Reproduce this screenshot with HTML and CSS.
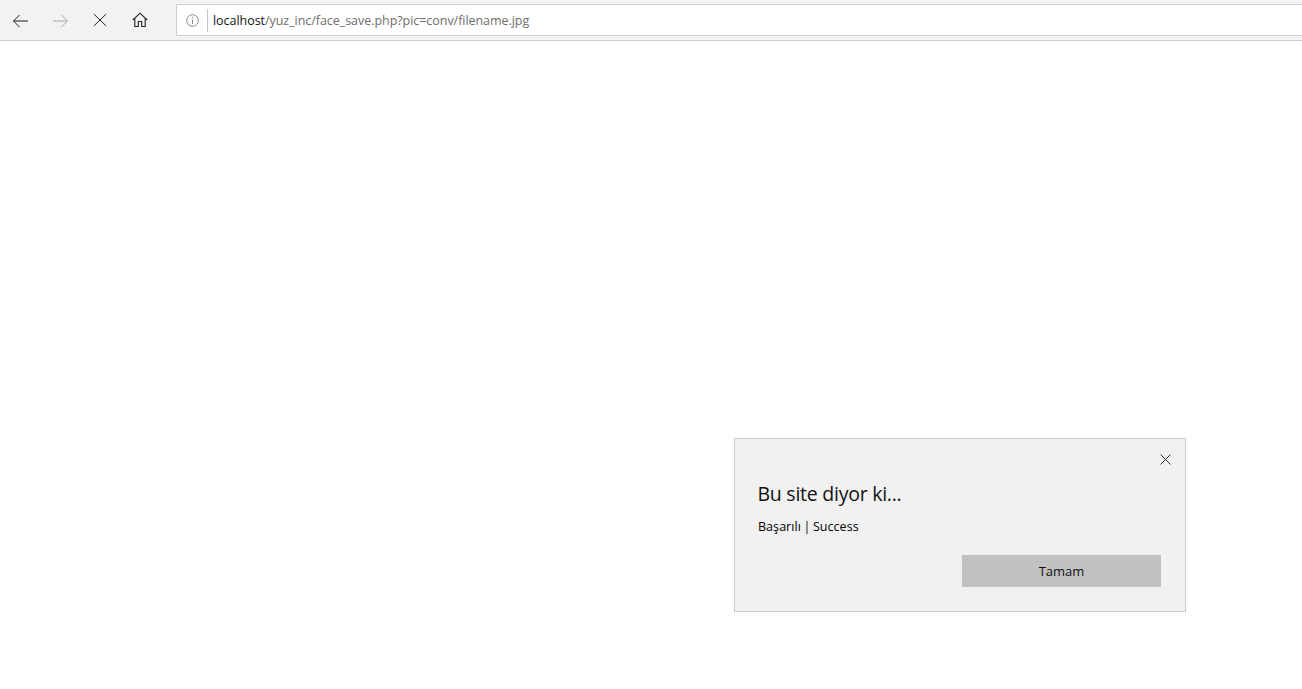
FILE: index.html
```html
<!DOCTYPE html>
<html lang="tr">
<head>
<meta charset="utf-8">
<title>Bu site diyor ki</title>
<link rel="stylesheet" href="styles.css">
</head>
<body>
<header class="toolbar">
  <nav class="nav">
    <span class="nav-btn"><svg width="16" height="16" viewBox="0 0 16 16"><path d="M16 9H1.500M7.500 3l-6 6 6 6" fill="none" stroke="#1c1c1c" stroke-width="1"/></svg></span>
    <span class="nav-btn"><svg width="16" height="16" viewBox="0 0 16 16"><path d="M1 9h14.500M9.500 3l6 6-6 6" fill="none" stroke="#a8a8a8" stroke-width="1"/></svg></span>
    <span class="nav-btn"><svg width="14" height="14" viewBox="0 0 14 14"><path d="M.8 1l12.400 12M13.200 1 .8 13" fill="none" stroke="#222" stroke-width="1"/></svg></span>
    <span class="nav-btn"><svg width="16" height="16" viewBox="0 0 16 16"><path d="M.8 8 8 1.200 15.200 8M2.800 6.500V14.500H6.300V9.500H9.700V14.500H13.200V6.500" fill="none" stroke="#222" stroke-width="1.100"/></svg></span>
  </nav>
  <div class="address">
    <svg class="info" width="13" height="13" viewBox="0 0 13 13"><circle cx="6.500" cy="6.500" r="5.800" fill="none" stroke="#8a8a8a"/><path d="M6.500 5.500V10M6.500 3v1.200" fill="none" stroke="#8a8a8a"/></svg>
    <span class="divider"></span>
    <span class="url"><span class="host">localhost</span>/yuz_inc/face_save.php?pic=conv/filename.jpg</span>
  </div>
</header>
<section class="dialog">
  <svg class="close" width="11" height="11" viewBox="0 0 11 11"><path d="M.5.500l10 10M10.500.500l-10 10" fill="none" stroke="#333"/></svg>
  <h1 class="title">Bu site diyor ki...</h1>
  <p class="message">Başarılı <span class="pipe">|</span> Success</p>
  <div class="actions"><button class="ok" type="button">Tamam</button></div>
</section>
</body>
</html>
```
FILE: styles.css
```css
* { box-sizing: border-box; }
html, body { margin: 0; height: 100%; background: #fff; overflow: hidden; }
body { font-family: "Open Sans", "Noto Sans", sans-serif; position: relative; }
.toolbar {
  height: 41px;
  background: #f2f2f2;
  border-bottom: 1px solid #cdcdcd;
  display: flex;
  align-items: flex-start;
}
.nav { display: flex; height: 40px; width: 176px; }
.nav-btn { width: 40px; height: 40px; display: flex; align-items: center; justify-content: center; }
.address {
  flex: 1;
  margin-top: 4px;
  height: 32px;
  background: #fff;
  border: 1px solid #cfcfcf;
  border-right: 0;
  display: flex;
  align-items: center;
  padding-left: 9px;
}
.info { flex: none; }
.divider { width: 1px; height: 23px; background: #c8c8c8; margin-left: 8px; margin-right: 5px; }
.url { font-size: 12.500px; color: #6e6e6e; letter-spacing: -0.045px; white-space: nowrap; }
.host { color: #111; }
.dialog {
  position: absolute;
  left: 734px;
  top: 438px;
  width: 452px;
  height: 174px;
  background: #f1f1f1;
  border: 1px solid #c9c9c9;
  padding: 41px 24px 0 22.500px;
}
.close { position: absolute; top: 15px; right: 14px; }
.title { margin: 0; font-size: 19.500px; line-height: 28px; font-weight: 400; color: #111; letter-spacing: -0.250px; }
.message { margin: 10px 0 0 .5px; font-size: 12.500px; line-height: 18px; color: #000; letter-spacing: 0.050px; }
.pipe { margin: 0 -0.750px; }
.actions { display: flex; justify-content: flex-end; margin-top: 19px; }
.ok {
  width: 199px;
  height: 32px;
  background: #c1c1c1;
  border: 0;
  padding: 0;
  font-family: inherit;
  font-size: 13px;
  color: #111;
}
```
